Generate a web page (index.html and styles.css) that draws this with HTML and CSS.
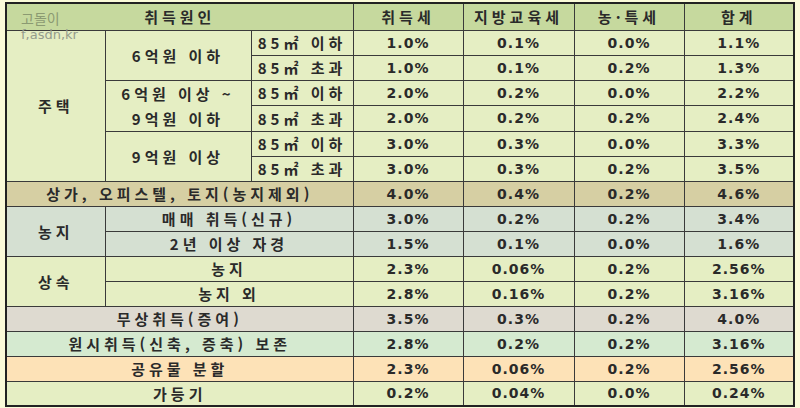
FILE: index.html
```html
<!DOCTYPE html>
<html lang="ko">
<head>
<meta charset="utf-8">
<link rel="stylesheet" href="styles.css">
</head>
<body>
<div class="wrap">
<table class="tax">
<colgroup>
<col class="c1"><col class="c2"><col class="c3"><col class="c4"><col class="c5"><col class="c6"><col class="c7">
</colgroup>
<thead>
<tr class="head"><th colspan="3" class="ko">취득원인</th><th class="ko">취득세</th><th class="ko">지방교육세</th><th class="ko">농·특세</th><th class="ko">합계</th></tr>
</thead>
<tbody>
<tr><td rowspan="6" class="ko">주택</td><td rowspan="2" class="ko">6억원 이하</td><td class="ko">85㎡ 이하</td><td>1.0%</td><td>0.1%</td><td>0.0%</td><td>1.1%</td></tr>
<tr><td class="ko">85㎡ 초과</td><td>1.0%</td><td>0.1%</td><td>0.2%</td><td>1.3%</td></tr>
<tr><td rowspan="2" class="ko two">6억원 이상 ~<br>9억원 이하</td><td class="ko">85㎡ 이하</td><td>2.0%</td><td>0.2%</td><td>0.0%</td><td>2.2%</td></tr>
<tr><td class="ko">85㎡ 초과</td><td>2.0%</td><td>0.2%</td><td>0.2%</td><td>2.4%</td></tr>
<tr><td rowspan="2" class="ko">9억원 이상</td><td class="ko">85㎡ 이하</td><td>3.0%</td><td>0.3%</td><td>0.0%</td><td>3.3%</td></tr>
<tr><td class="ko">85㎡ 초과</td><td>3.0%</td><td>0.3%</td><td>0.2%</td><td>3.5%</td></tr>
<tr class="store"><td colspan="3" class="ko">상가, 오피스텔, 토지(농지제외)</td><td>4.0%</td><td>0.4%</td><td>0.2%</td><td>4.6%</td></tr>
<tr class="farm"><td rowspan="2" class="ko">농지</td><td colspan="2" class="ko">매매 취득(신규)</td><td>3.0%</td><td>0.2%</td><td>0.2%</td><td>3.4%</td></tr>
<tr class="farm"><td colspan="2" class="ko">2년 이상 자경</td><td>1.5%</td><td>0.1%</td><td>0.0%</td><td>1.6%</td></tr>
<tr><td rowspan="2" class="ko">상속</td><td colspan="2" class="ko">농지</td><td>2.3%</td><td>0.06%</td><td>0.2%</td><td>2.56%</td></tr>
<tr><td colspan="2" class="ko">농지 외</td><td>2.8%</td><td>0.16%</td><td>0.2%</td><td>3.16%</td></tr>
<tr class="gift"><td colspan="3" class="ko">무상취득(증여)</td><td>3.5%</td><td>0.3%</td><td>0.2%</td><td>4.0%</td></tr>
<tr class="build"><td colspan="3" class="ko">원시취득(신축, 증축) 보존</td><td>2.8%</td><td>0.2%</td><td>0.2%</td><td>3.16%</td></tr>
<tr class="split"><td colspan="3" class="ko">공유물 분할</td><td>2.3%</td><td>0.06%</td><td>0.2%</td><td>2.56%</td></tr>
<tr><td colspan="3" class="ko">가등기</td><td>0.2%</td><td>0.04%</td><td>0.0%</td><td>0.24%</td></tr>
</tbody>
</table>
<div class="mark"><div class="mark-name">고돌이</div><div class="mark-url">f,asdn,kr</div></div>
</div>
</body>
</html>
```
FILE: styles.css
```css
html, body {
  margin: 0;
  padding: 0;
  background: #fafad8;
}
.wrap {
  position: relative;
  padding: 2px 0 0 5px;
}
.tax {
  border-collapse: collapse;
  table-layout: fixed;
  width: 788px;
  border: 2px solid #222;
  background: #e5eec3;
  color: #2a2a2a;
  font-family: "DejaVu Sans", "Noto Sans CJK KR", sans-serif;
  font-weight: bold;
  font-size: 14px;
}
.c1 { width: 99px; }
.c2 { width: 146px; }
.c3 { width: 102px; }
.c4 { width: 110px; }
.c5 { width: 111px; }
.c6 { width: 110px; }
.c7 { width: 110px; }
.tax th, .tax td {
  border: 1px solid #3a3a3a;
  padding: 0;
  text-align: center;
  vertical-align: middle;
  letter-spacing: 1px;
  white-space: nowrap;
  overflow: hidden;
}
.tax tr { height: 25px; }
.tax .head { height: 27px; background: #c6d99e; }
.tax th { font-weight: bold; }
.tax .ko {
  font-family: "Noto Sans CJK KR", sans-serif;
  letter-spacing: 4px;
  font-size: 15px;
  font-weight: bold;
}
.tax .two { line-height: 25px; }
.store { background: #d6cfa3; }
.farm { background: #d5e0d2; }
.gift { background: #dedad0; }
.build { background: #d5ead0; }
.split { background: #fde2b7; }
.mark {
  position: absolute;
  left: 21px;
  top: 8px;
  color: #8b9a72;
  font-weight: normal;
}
.mark-name {
  font-family: "Noto Sans CJK KR", sans-serif;
  font-size: 14px;
  line-height: 20px;
}
.mark-url {
  font-family: "DejaVu Sans", sans-serif;
  font-size: 13px;
  line-height: 14px;
  color: #949c8c;
}
```
